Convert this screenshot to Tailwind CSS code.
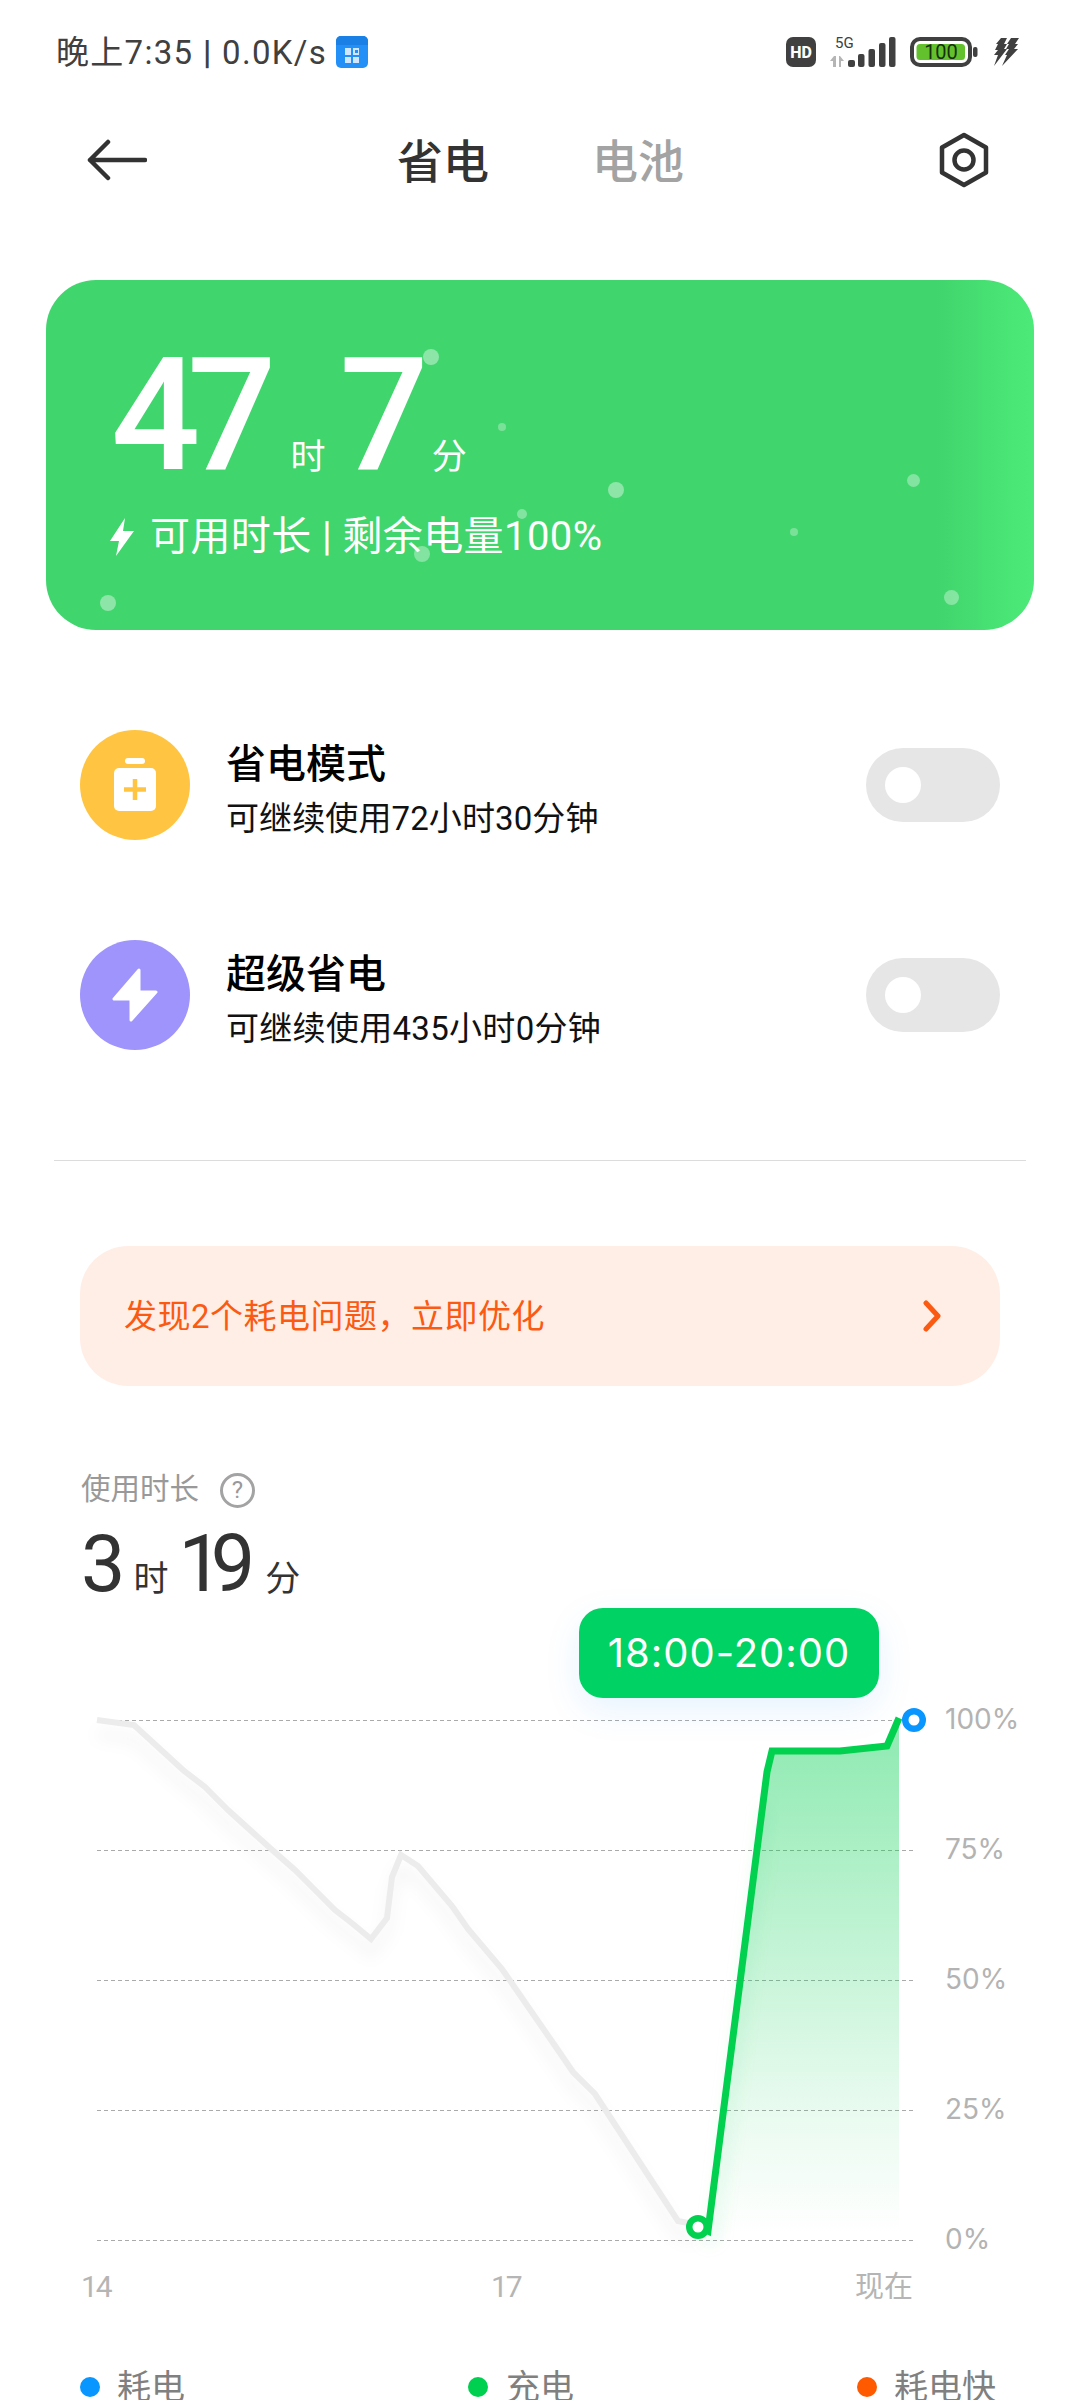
<!DOCTYPE html>
<html lang="zh-CN">
<head>
<meta charset="utf-8">
<script src="https://cdn.jsdelivr.net/npm/@tailwindcss/browser@4"></script>
</head>
<body class="bg-white">
<div class="relative w-[1080px] h-[2400px] overflow-hidden bg-white font-['Roboto','Noto_Sans_CJK_SC',sans-serif]">

  <!-- status bar -->
  <div class="flex h-[104px] items-center justify-between pl-[56px] pr-[58px] text-[#404040]">
    <div class="flex items-center gap-[9px]">
      <span class="text-[33px] leading-none tracking-[1.3px] whitespace-nowrap">晚上7:35 <span class="font-bold">|</span> 0.0K/s</span>
      <svg width="32" height="32" viewBox="0 0 32 32"><rect width="32" height="32" rx="5" fill="#2390f7"/><path d="M0 9V5a5 5 0 0 1 5-5h22a5 5 0 0 1 5 5v4z" fill="#1a80e6"/><rect x="9" y="12" width="6" height="7" fill="#cfe6fd"/><rect x="17" y="12" width="6" height="7" fill="#cfe6fd"/><rect x="19" y="14" width="3" height="3" fill="#2390f7"/><rect x="9" y="21" width="6" height="6" fill="#cfe6fd"/><rect x="17" y="21" width="6" height="6" fill="#cfe6fd"/></svg>
    </div>
    <svg width="236" height="36" viewBox="0 0 236 36">
      <rect x="0" y="3" width="30" height="30" rx="7" fill="#404040"/>
      <text x="15" y="24" text-anchor="middle" fill="#fff" font-size="16" font-weight="800" font-family="Roboto">HD</text>
      <text x="49" y="14" font-size="15" fill="#404040" font-family="Roboto">5G</text>
      <path d="M50 33v-11h-2l-4 5h3v6zM53 22v11h2v-6h3l-4-5z" fill="#b5b5b5"/>
      <rect x="62" y="26" width="7" height="7" rx="2" fill="#404040"/>
      <rect x="72" y="20" width="6.500" height="13" rx="2" fill="#404040"/>
      <rect x="82.500" y="15" width="6.500" height="18" rx="2" fill="#404040"/>
      <rect x="93" y="9" width="6.500" height="24" rx="2" fill="#404040"/>
      <rect x="103" y="3" width="6.500" height="30" rx="2" fill="#404040"/>
      <rect x="126" y="5" width="58" height="26" rx="8" fill="none" stroke="#404040" stroke-width="4"/>
      <rect x="130.500" y="10" width="48.500" height="16" rx="3.500" fill="#63c12e"/>
      <text x="155" y="25" text-anchor="middle" font-size="20" fill="#17300c" font-family="Roboto">100</text>
      <rect x="187" y="13" width="4.500" height="10" rx="2" fill="#404040"/>
      <g transform="translate(207 4)" fill="#404040">
        <path d="M8 0H14L11 6H14L11 11H14L1 28L5 17H1L5 12H2L5 6H3Z"/>
        <path d="M18 0H26L22 6H25L21 11H25L9 28L14 17H12L16 11H13L16 6H14Z"/>
      </g>
    </svg>
  </div>

  <!-- nav -->
  <div class="flex h-[112px] items-center pl-[87px] pr-[91px]">
    <svg width="60" height="42" viewBox="0 0 60 42" fill="none" stroke="#333" stroke-width="4.500" stroke-linecap="round" stroke-linejoin="round"><path d="M58 21H3M21 3L3 21L21 39"/></svg>
    <div class="ml-[250px] flex items-center gap-[103px] pt-[3px] text-[46px] leading-none font-medium">
      <span class="text-[#333]">省电</span>
      <span class="text-[#a3a3a3]">电池</span>
    </div>
    <svg class="ml-auto" width="50" height="56" viewBox="0 0 50 56" fill="none" stroke="#333" stroke-width="4.500" stroke-linejoin="round"><path d="M25 3L47 15.500V40.500L25 53L3 40.500V15.500Z"/><circle cx="25" cy="28" r="9.500"/></svg>
  </div>

  <!-- hero card -->
  <div class="relative mx-[46px] mt-[64px] h-[350px] rounded-[50px] bg-[linear-gradient(90deg,#41d56d_90%,#4cea78_100%)] text-white overflow-hidden">
    <span class="absolute left-[377px] top-[69px] size-[16px] rounded-full bg-white/40"></span>
    <span class="absolute left-[452px] top-[143px] size-[8px] rounded-full bg-white/30"></span>
    <span class="absolute left-[562px] top-[202px] size-[16px] rounded-full bg-white/40"></span>
    <span class="absolute left-[471px] top-[229px] size-[10px] rounded-full bg-white/35"></span>
    <span class="absolute left-[368px] top-[266px] size-[16px] rounded-full bg-white/35"></span>
    <span class="absolute left-[861px] top-[194px] size-[13px] rounded-full bg-white/35"></span>
    <span class="absolute left-[744px] top-[248px] size-[8px] rounded-full bg-white/30"></span>
    <span class="absolute left-[898px] top-[310px] size-[15px] rounded-full bg-white/35"></span>
    <span class="absolute left-[54px] top-[315px] size-[16px] rounded-full bg-white/40"></span>

    <div class="relative flex items-baseline pl-[65px] pt-[60px] leading-[150px]">
      <span class="text-[157px] font-medium tracking-[-13px]">47</span>
      <span class="ml-[27px] text-[35px] leading-none">时</span>
      <span class="ml-[14px] text-[157px] font-medium">7</span>
      <span class="ml-[3px] text-[35px] leading-none">分</span>
    </div>
    <div class="relative mt-[27px] flex items-center pl-[63px]">
      <svg width="26" height="40" viewBox="0 0 26 40" fill="#fff"><path d="M16 1L1 24H10L7 39L25 14H14Z"/></svg>
      <span class="ml-[15px] text-[40px] leading-none tracking-[0.4px] whitespace-nowrap">可用时长 | 剩余电量100%</span>
    </div>
  </div>

  <!-- mode rows -->
  <div class="mt-[100px] flex h-[110px] items-center pl-[80px] pr-[80px]">
    <div class="flex size-[110px] items-center justify-center rounded-full bg-[#ffc542]">
      <svg width="44" height="54" viewBox="0 0 44 54"><rect x="12" y="0" width="20" height="6" rx="3" fill="#fff"/><rect x="1" y="10" width="42" height="43" rx="5" fill="#fff"/><path d="M22 21v21M11 31.500h22" stroke="#ffc542" stroke-width="4.500"/></svg>
    </div>
    <div class="ml-[36px] flex-1 pt-[10px]">
      <div class="text-[40px] leading-[46px] font-medium text-black">省电模式</div>
      <div class="mt-[11px] text-[33px] leading-[40px] tracking-[0.1px] text-[#111]">可继续使用72小时30分钟</div>
    </div>
    <div class="flex h-[74px] w-[134px] items-center rounded-full bg-[#e6e6e6] pl-[19px]"><span class="size-[36px] rounded-full bg-white"></span></div>
  </div>
  <div class="mt-[100px] flex h-[110px] items-center pl-[80px] pr-[80px]">
    <div class="flex size-[110px] items-center justify-center rounded-full bg-[#9e94fb]">
      <svg width="46" height="54" viewBox="0 0 46 54" fill="#fff" stroke="#fff" stroke-width="3" stroke-linejoin="round"><path d="M27 2L2 31H19V52L44 24H27Z"/></svg>
    </div>
    <div class="ml-[36px] flex-1 pt-[10px]">
      <div class="text-[40px] leading-[46px] font-medium text-black">超级省电</div>
      <div class="mt-[11px] text-[33px] leading-[40px] tracking-[0.3px] text-[#111]">可继续使用435小时0分钟</div>
    </div>
    <div class="flex h-[74px] w-[134px] items-center rounded-full bg-[#e6e6e6] pl-[19px]"><span class="size-[36px] rounded-full bg-white"></span></div>
  </div>

  <div class="mx-[54px] mt-[110px] h-px bg-[#dcdcdc]"></div>

  <!-- banner -->
  <div class="mx-[80px] mt-[85px] flex h-[140px] items-center justify-between rounded-[48px] bg-[#ffeee6] pl-[44px] pr-[58px]">
    <span class="text-[33px] leading-none tracking-[0.5px] text-[#fb5a13]">发现2个耗电问题，立即优化</span>
    <svg width="20" height="32" viewBox="0 0 20 32" fill="none" stroke="#fb5a13" stroke-width="5" stroke-linecap="round" stroke-linejoin="round"><path d="M4 3L16 16L4 29"/></svg>
  </div>

  <!-- usage -->
  <div class="mt-[84px] flex h-[40px] items-center pl-[81px] text-[#999]">
    <span class="text-[29.500px] leading-none">使用时长</span>
    <span class="ml-[21px] flex size-[35px] items-center justify-center rounded-full border-[3px] border-[#a3a3a3] text-[24px] leading-none">?</span>
  </div>
  <div class="flex h-[98px] items-baseline pl-[81px] pt-[14px] text-[#333]">
    <span class="text-[79px] leading-[80px]">3</span>
    <span class="ml-[8px] text-[35px] leading-none">时</span>
    <span class="ml-[10px] text-[79px] leading-[80px] tracking-[-12px]">19</span>
    <span class="ml-[22px] text-[35px] leading-none">分</span>
  </div>

  <!-- chart -->
  <div class="relative h-[752px]">
    <svg class="absolute left-0 top-0" width="1080" height="752" viewBox="0 1608 1080 752">
      <defs>
        <linearGradient id="fillGreen" x1="0" y1="1750" x2="0" y2="2235" gradientUnits="userSpaceOnUse">
          <stop offset="0" stop-color="#00cf4f" stop-opacity="0.42"/>
          <stop offset="0.47" stop-color="#00cf4f" stop-opacity="0.21"/>
          <stop offset="0.74" stop-color="#00cf4f" stop-opacity="0.09"/>
          <stop offset="1" stop-color="#00cf4f" stop-opacity="0"/>
        </linearGradient>
        <filter id="soft" x="-20%" y="-20%" width="140%" height="140%"><feGaussianBlur stdDeviation="8"/></filter>
      </defs>
      <g stroke="#aaaaaa" stroke-width="1" stroke-dasharray="4 3">
        <path d="M97 1720.500H914"/><path d="M97 1850.500H914"/><path d="M97 1980.500H914"/><path d="M97 2110.500H914"/><path d="M97 2240.500H914"/>
      </g>
      <path d="M97 1720L134 1725L183 1770L205 1787L228 1810L270 1848L295 1870L317 1892L335 1910L353 1924L371 1939L387 1918L392 1877L401 1855L418 1866L452 1906L468 1929L502 1969L560 2053L573 2072L595 2094L678 2221L698 2225" transform="translate(0 14)" fill="none" stroke="#000" stroke-opacity="0.05" stroke-width="7" filter="url(#soft)"/>
      <path d="M97 1720L134 1725L183 1770L205 1787L228 1810L270 1848L295 1870L317 1892L335 1910L353 1924L371 1939L387 1918L392 1877L401 1855L418 1866L452 1906L468 1929L502 1969L560 2053L573 2072L595 2094L678 2221L698 2225" fill="none" stroke="#ececec" stroke-width="6"/>
      <path d="M698 2236L708 2231L767 1772L772 1751L840 1751L887 1746L899 1718V2240H712V2262H698Z" fill="url(#fillGreen)"/>
      <path d="M698 2236L708 2231L760 1800" transform="translate(6 6)" fill="none" stroke="#00cf4f" stroke-opacity="0.12" stroke-width="8" filter="url(#soft)"/>
      <path d="M698 2226L708 2231L767 1772L772 1751L840 1751L887 1746L899 1718" fill="none" stroke="#02d14f" stroke-width="7"/>
      <circle cx="698" cy="2227" r="8.750" fill="#fff" stroke="#02d14f" stroke-width="6.500"/>
      <circle cx="914" cy="1720" r="8.750" fill="#fff" stroke="#0a96ff" stroke-width="6.500"/>
      <g fill="#b3b3b3" font-size="28" font-family="Inter">
        <text x="945" y="1729">100%</text>
        <text x="945" y="1859">75%</text>
        <text x="945" y="1989">50%</text>
        <text x="945" y="2119">25%</text>
        <text x="945" y="2249">0%</text>
      </g>
      <g fill="#b5b5b5" font-size="30" font-family="Roboto, 'Noto Sans CJK SC'">
        <text x="81" y="2297" letter-spacing="-2">14</text>
        <text x="491" y="2297" letter-spacing="-2">17</text>
        <text x="855" y="2297" font-size="29">现在</text>
      </g>
    </svg>
    <div class="absolute left-[579px] top-0 flex h-[90px] w-[300px] items-center justify-center rounded-[24px] bg-[#00d263] font-['Inter','Roboto',sans-serif] text-[40px] leading-none tracking-[1px] text-white shadow-[0_12px_36px_rgba(0,140,255,0.10)]">18:00-20:00</div>
  </div>

  <!-- legend -->
  <div class="flex h-[54px] items-center pl-[80px] text-[34px] leading-none text-[#808080]">
    <div class="flex w-[388px] items-center"><span class="size-[20px] rounded-full bg-[#0a96ff]"></span><span class="ml-[17px]">耗电</span></div>
    <div class="flex w-[389px] items-center"><span class="size-[20px] rounded-full bg-[#00d04f]"></span><span class="ml-[18px]">充电</span></div>
    <div class="flex items-center"><span class="size-[20px] rounded-full bg-[#ff5a00]"></span><span class="ml-[17px]">耗电快</span></div>
  </div>
</div>
</body>
</html>
